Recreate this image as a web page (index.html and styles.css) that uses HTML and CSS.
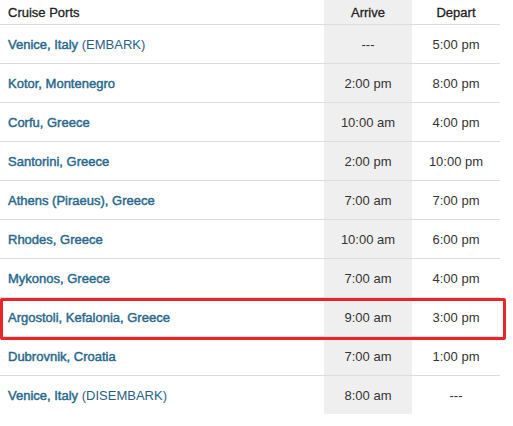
FILE: index.html
```html
<!DOCTYPE html>
<html>
<head>
<meta charset="utf-8">
<link rel="stylesheet" href="styles.css">
</head>
<body>
<div class="wrap">
  <table class="ports">
    <colgroup>
      <col class="c-port">
      <col class="c-time">
      <col class="c-time">
    </colgroup>
    <thead>
      <tr>
        <th class="port">Cruise Ports</th>
        <th class="arrive">Arrive</th>
        <th class="depart">Depart</th>
      </tr>
    </thead>
    <tbody>
      <tr><td class="port"><span class="name">Venice, Italy</span> <span class="note">(EMBARK)</span></td><td class="arrive">---</td><td class="depart">5:00 pm</td></tr>
      <tr><td class="port"><span class="name">Kotor, Montenegro</span></td><td class="arrive">2:00 pm</td><td class="depart">8:00 pm</td></tr>
      <tr><td class="port"><span class="name">Corfu, Greece</span></td><td class="arrive">10:00 am</td><td class="depart">4:00 pm</td></tr>
      <tr><td class="port"><span class="name">Santorini, Greece</span></td><td class="arrive">2:00 pm</td><td class="depart">10:00 pm</td></tr>
      <tr><td class="port"><span class="name">Athens (Piraeus), Greece</span></td><td class="arrive">7:00 am</td><td class="depart">7:00 pm</td></tr>
      <tr><td class="port"><span class="name">Rhodes, Greece</span></td><td class="arrive">10:00 am</td><td class="depart">6:00 pm</td></tr>
      <tr><td class="port"><span class="name">Mykonos, Greece</span></td><td class="arrive">7:00 am</td><td class="depart">4:00 pm</td></tr>
      <tr><td class="port"><span class="name">Argostoli, Kefalonia, Greece</span></td><td class="arrive">9:00 am</td><td class="depart">3:00 pm</td></tr>
      <tr><td class="port"><span class="name">Dubrovnik, Croatia</span></td><td class="arrive">7:00 am</td><td class="depart">1:00 pm</td></tr>
      <tr><td class="port"><span class="name">Venice, Italy</span> <span class="note">(DISEMBARK)</span></td><td class="arrive">8:00 am</td><td class="depart">---</td></tr>
    </tbody>
  </table>
  <div class="highlight"></div>
</div>
</body>
</html>
```
FILE: styles.css
```css
html, body {
  margin: 0;
  padding: 0;
  background: #ffffff;
}
body {
  font-family: "Liberation Sans", Arial, sans-serif;
  font-size: 13px;
  color: #333333;
}
.wrap {
  position: relative;
  width: 513px;
}
.ports {
  width: 500px;
  border-collapse: collapse;
  table-layout: fixed;
}
.c-port { width: 324px; }
.c-time { width: 88px; }
.ports th,
.ports td {
  padding: 0 8px;
  text-align: center;
  border-bottom: 1px solid #dcdcdc;
  white-space: nowrap;
}
.ports th {
  height: 24px;
  font-weight: normal;
  color: #222222;
  -webkit-text-stroke: 0.3px #222222;
}
.ports td {
  height: 38px;
}
.ports tbody tr:last-child td {
  border-bottom: none;
}
.ports .port {
  text-align: left;
}
.ports .arrive {
  background: #efefef;
}
.name {
  color: #2a698c;
  -webkit-text-stroke: 0.45px #2a698c;
}
.note {
  color: #2a5f85;
}
.highlight {
  position: absolute;
  left: 0;
  top: 298px;
  width: 500px;
  height: 36px;
  border: 3px solid #e8252b;
  border-radius: 2px;
}
```
